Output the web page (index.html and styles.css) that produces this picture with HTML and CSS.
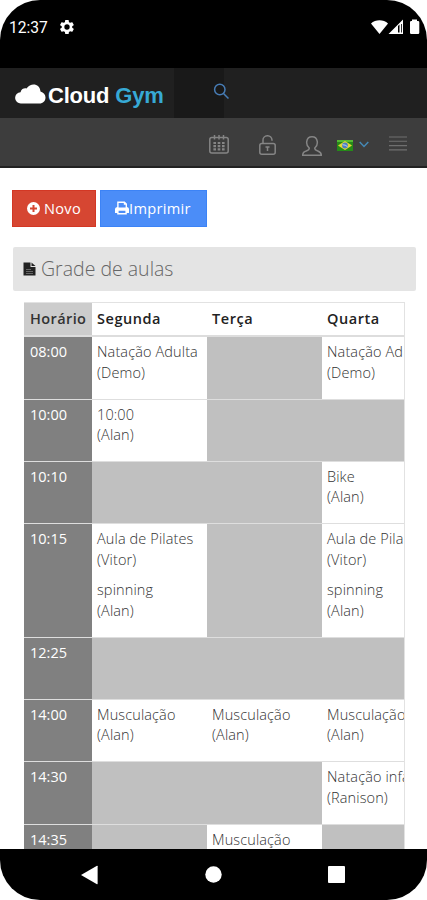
FILE: index.html
```html
<!DOCTYPE html>
<html lang="pt-BR">
<head>
    <meta charset="UTF-8">
    <meta name="viewport" content="width=device-width, initial-scale=1.0">
    <title>Cloud Gym - Grade de aulas</title>
    <link rel="stylesheet" href="styles.css">
</head>
<body>
    <div class="phone">
        <div class="status-bar">
            <span class="clock">12:37</span>
            <svg class="gear" width="14" height="16" viewBox="2 2 20 20"><path fill="#fff" fill-rule="evenodd" d="M19.4 13a7.6 7.6 0 0 0 0-2l2.1-1.6a.5.5 0 0 0 .1-.6l-2-3.5a.5.5 0 0 0-.6-.2l-2.5 1a7.3 7.3 0 0 0-1.7-1l-.4-2.6a.5.5 0 0 0-.5-.4h-4a.5.5 0 0 0-.5.4L9 5.1a7.3 7.3 0 0 0-1.7 1l-2.5-1a.5.5 0 0 0-.6.2l-2 3.5a.5.5 0 0 0 .1.6L4.500 11a7.6 7.6 0 0 0 0 2l-2.2 1.6a.5.5 0 0 0-.1.6l2 3.5c.1.2.4.3.6.2l2.500-1a7.3 7.3 0 0 0 1.7 1l.4 2.600c0 .3.2.5.5.5h4c.3 0 .5-.2.5-.5l.4-2.600a7.3 7.3 0 0 0 1.700-1l2.500 1c.2.1.5 0 .6-.2l2-3.500a.5.5 0 0 0-.1-.6zM12 15.800a3.800 3.800 0 1 1 0-7.600 3.800 3.800 0 0 1 0 7.600z"/></svg>
            <svg class="signals" width="49" height="16" viewBox="0 0 49 16">
                <path fill="#fff" d="M0 4.500C4.500.2 12.500.2 17 4.500L8.500 15z"/>
                <path fill="#fff" fill-rule="evenodd" d="M17.500 15L32 .5V15zM27 7v6.500h1.500V5.500zM30 5v8.500h.8V5z"/>
                <path fill="#fff" d="M41 2V.5h5V2h1q1.300 0 1.300 1.300v10.400q0 1.300-1.300 1.300h-6.700Q39 15 39 13.700V3.300Q39 2 40.300 2z"/>
            </svg>
        </div>

        <div class="header">
            <div class="logo">
                <svg width="31" height="20" viewBox="0 0 31 20"><path fill="#fff" d="M6 19.500a5.600 5.600 0 0 1-.5-11.200C6.500 4.500 9.500 4 11.500 4.500 16-2 25-.3 25.500 7.500c3 .8 5 3.200 5 6 0 3.500-2.500 6-6 6z"/></svg>
                <span>Cloud <b>Gym</b></span>
            </div>
            <div class="search">
                <svg width="17" height="17" viewBox="0 0 17 17" fill="none" stroke="#477cb5" stroke-width="1.500"><circle cx="6.800" cy="6.500" r="5.200"/><path d="M10.500 10.500L15.500 15.500"/></svg>
            </div>
        </div>

        <div class="toolbar">
            <svg class="calendar" width="20" height="20" viewBox="0 0 20 20" fill="none" stroke="#858585" stroke-width="1.500">
                <rect x=".8" y="2.500" width="18.400" height="15.500" rx="2"/>
                <path d="M5.500 0v4.500M10 0v4.500M14.500 0v4.500"/>
                <path stroke-width="2.200" stroke-dasharray="2.600 1.700" d="M4.400 8h11.200M4.400 11.200h11.200M4.400 14.400h11.200"/>
            </svg>
            <svg class="lock" width="17" height="20" viewBox="0 0 17 20" fill="none" stroke="#858585" stroke-width="1.500">
                <rect x=".8" y="8.500" width="15.400" height="10.700" rx="2"/>
                <path d="M4 8.500V5.500a4.500 4.500 0 0 1 9-.5v.8M6.500 12h4M8.500 12v4"/>
            </svg>
            <svg class="user" width="20" height="20" viewBox="0 0 20 20" fill="none" stroke="#858585" stroke-width="1.500"><path d="M7.200 12C3.500 9 3.500.8 10 .8S16.500 9 12.800 12c-.4 2 .8 2.200 3 3 2 .7 3.500 1.500 3.500 4.200H.7C.7 16.500 2 15.700 4.200 15c2.200-.8 3.400-1 3-3z"/></svg>
            <svg class="flag" width="16" height="11" viewBox="0 0 16 11"><path fill="#258a18" d="M0 0h16v11H0z"/><path fill="#55bb35" d="M0 0h16v2H0z"/><path fill="#e4d837" d="M8 1l7 4.500-7 4.500-7-4.500z"/><circle cx="8" cy="5.500" r="2.900" fill="#4c7fc4"/><path d="M5.500 4.700q3 0 5 2" fill="none" stroke="#dbe9f1" stroke-width=".8"/></svg>
            <svg class="chevron" width="10" height="7" viewBox="0 0 10 7" fill="none" stroke="#4588b4" stroke-width="1.500"><path d="M.7 1L5 5.500 9.300 1"/></svg>
            <svg class="menu" width="18" height="15" viewBox="0 0 18 15" stroke="#707070" stroke-width="1.100"><path d="M0 1h18M0 5.300h18M0 9.600h18M0 13.900h18"/></svg>
        </div>

        <div class="content">
            <div class="actions">
                <button class="btn btn-new">
                    <svg width="13" height="13" viewBox="0 0 13 13"><circle cx="6.500" cy="6.500" r="6.500" fill="#fff"/><path d="M6.500 3v7M3 6.500h7" stroke="#d64632" stroke-width="2"/></svg>
                    <span>Novo</span>
                </button>
                <button class="btn btn-print">
                    <svg width="14" height="14" viewBox="0 0 14 14"><path fill="#fff" fill-rule="evenodd" d="M2.200.5h7.500L12 2.800V6q2 .3 2 2v4h-2.200v1.500H2.200V12H0V8q0-1.700 2.200-2zM3.600 2v4.500h7V3.800H8.800V2zM3.600 9.800V12h6.800V9.800z"/></svg><span>Imprimir</span>
                </button>
            </div>

            <div class="panel-title">
                <svg width="13" height="14" viewBox="0 0 13 14"><path fill="#222" d="M.5.500h7V5h5v8.500H.5z"/><path fill="#222" d="M8.500.500l4 3.500h-4z"/><path d="M3 7.500h5M3 9.500h7M3 11.500h7" stroke="#777" stroke-width=".8"/></svg>
                <h1>Grade de aulas</h1>
            </div>

            <div class="schedule">
                <div class="row head">
                    <div class="time">Horário</div><div>Segunda</div><div>Terça</div><div>Quarta</div>
                </div>
                <div class="row">
                    <div class="time">08:00</div>
                    <div class="cell"><p>Natação Adulta<br>(Demo)</p></div>
                    <div class="empty"></div>
                    <div class="cell"><p>Natação Ad<br>(Demo)</p></div>
                </div>
                <div class="row">
                    <div class="time">10:00</div>
                    <div class="cell"><p>10:00<br>(Alan)</p></div>
                    <div class="empty"></div>
                    <div class="empty"></div>
                </div>
                <div class="row">
                    <div class="time">10:10</div>
                    <div class="empty"></div>
                    <div class="empty"></div>
                    <div class="cell"><p>Bike<br>(Alan)</p></div>
                </div>
                <div class="row double">
                    <div class="time">10:15</div>
                    <div class="cell"><p>Aula de Pilates<br>(Vitor)</p><p>spinning<br>(Alan)</p></div>
                    <div class="empty"></div>
                    <div class="cell"><p>Aula de Pila<br>(Vitor)</p><p>spinning<br>(Alan)</p></div>
                </div>
                <div class="row">
                    <div class="time">12:25</div>
                    <div class="empty"></div>
                    <div class="empty"></div>
                    <div class="empty"></div>
                </div>
                <div class="row">
                    <div class="time">14:00</div>
                    <div class="cell"><p>Musculação<br>(Alan)</p></div>
                    <div class="cell"><p>Musculação<br>(Alan)</p></div>
                    <div class="cell"><p>Musculação<br>(Alan)</p></div>
                </div>
                <div class="row">
                    <div class="time">14:30</div>
                    <div class="empty"></div>
                    <div class="empty"></div>
                    <div class="cell"><p>Natação infa<br>(Ranison)</p></div>
                </div>
                <div class="row">
                    <div class="time">14:35</div>
                    <div class="empty"></div>
                    <div class="cell"><p>Musculação</p></div>
                    <div class="empty"></div>
                </div>
            </div>
        </div>

        <div class="nav-bar">
            <svg width="17" height="20" viewBox="0 0 17 20"><path fill="#fff" d="M0 10L16 .8q.6-.3.600.4v17.600q0 .7-.6.400z"/></svg>
            <svg width="17" height="17" viewBox="0 0 17 17"><circle cx="8.500" cy="8.500" r="8.200" fill="#fff"/></svg>
            <svg width="17" height="17" viewBox="0 0 17 17"><rect width="17" height="17" rx="1" fill="#fff"/></svg>
        </div>
    </div>
</body>
</html>
```
FILE: styles.css
```css
* {
    box-sizing: border-box;
}

body {
    margin: 0;
    background: #fff;
    font-family: "Open Sans", "Liberation Sans", sans-serif;
    overflow: hidden;
}

svg {
    display: block;
    flex: none;
}

.phone {
    width: 427px;
    height: 900px;
    display: flex;
    flex-direction: column;
    background: #fff;
    border-radius: 40px;
    overflow: hidden;
}

/* status bar */
.status-bar {
    height: 68px;
    flex: none;
    display: flex;
    align-items: flex-start;
    padding: 19px 7px 0 9px;
    background: #000;
    color: #fff;
}

.clock {
    width: 51px;
    font: 15.6px/19px Roboto, sans-serif;
}

.signals {
    margin-left: auto;
}

/* top header */
.header {
    height: 50px;
    flex: none;
    display: flex;
    background: #202020;
}

.logo {
    width: 174px;
    display: flex;
    padding: 16px 0 0 15px;
    color: #fff;
    font: bold 22px/24px "Liberation Sans", sans-serif;
    white-space: nowrap;
}

.logo span {
    margin-left: 2px;
    letter-spacing: -0.2px;
}

.logo b {
    color: #37a9d5;
}

.search {
    width: 50px;
    padding: 15px 0 0 39px;
    background: #191919;
}

.toolbar {
    height: 50px;
    flex: none;
    display: flex;
    align-items: flex-start;
    padding: 17px 20px 0 209px;
    background: #3d3d3d;
    border-bottom: 2px solid #222;
}

.toolbar .lock {
    margin-left: 30px;
}

.toolbar .user {
    margin: 1px 0 0 26px;
}

.toolbar .flag {
    margin: 5px 0 0 15px;
}

.toolbar .chevron {
    margin: 6px 0 0 6px;
}

.toolbar .menu {
    margin: 1px 0 0 auto;
}

/* page */
.content {
    flex: 1;
    min-height: 0;
    padding: 22px 11px 0 12px;
    overflow: hidden;
}

.actions {
    display: flex;
    gap: 4px;
}

.btn {
    height: 37px;
    display: flex;
    align-items: center;
    border: 1px solid #d33724;
    padding: 0 0 1px 14px;
    color: #fff;
    font: 14.6px/20px "Open Sans", sans-serif;
    letter-spacing: 0.3px;
}

.btn-new {
    width: 84px;
    gap: 4px;
    background: #d64632;
}

.btn-print {
    width: 107px;
    background: #4b8df8;
    border-color: #3c83f6;
}

.panel-title {
    height: 44px;
    display: flex;
    align-items: center;
    gap: 5px;
    margin-top: 20px;
    margin-left: 1px;
    padding-left: 10px;
    background: #e4e4e4;
    border-radius: 2px;
}

.panel-title h1 {
    margin: 0;
    color: #666;
    font-size: 19.5px;
    font-weight: 300;
    line-height: 28px;
}

/* schedule table, cut off on the right like a scroll area */
.schedule {
    width: 381px;
    margin: 11px 0 0 12px;
    border: 1px solid #e2e2e2;
    border-width: 1px 1px 0 0;
    overflow: hidden;
}

.row {
    display: grid;
    grid-template-columns: 68px 115px 115px 115px;
    width: 413px;
    height: 62.4px;
    border-bottom: 1px solid #dedede;
    color: #333;
    font-size: 14.5px;
    font-weight: 300;
    line-height: 20.4px;
    letter-spacing: 0.12px;
}

.row.double {
    height: 113.2px;
}

.row > div {
    padding: 5px 0 0 5px;
    white-space: nowrap;
}

.row .time {
    padding-left: 6px;
    background: #808080;
    color: #fff;
    font-weight: 400;
    letter-spacing: 0;
}

.row .empty {
    background: #c0c0c0;
}

.row p {
    margin: 0 0 10px;
}

.row.head {
    height: 34.3px;
    border-bottom: 2px solid #ddd;
    color: #222;
    font-weight: 600;
    letter-spacing: 0.55px;
}

.row.head > div {
    padding-top: 6px;
}

.row.head .time {
    background: #ccc;
    color: #333;
    font-weight: 600;
    letter-spacing: 0.4px;
}

/* android buttons */
.nav-bar {
    height: 51px;
    flex: none;
    display: flex;
    justify-content: space-between;
    align-items: center;
    padding: 0 82px 0 81px;
    background: #000;
}
```
